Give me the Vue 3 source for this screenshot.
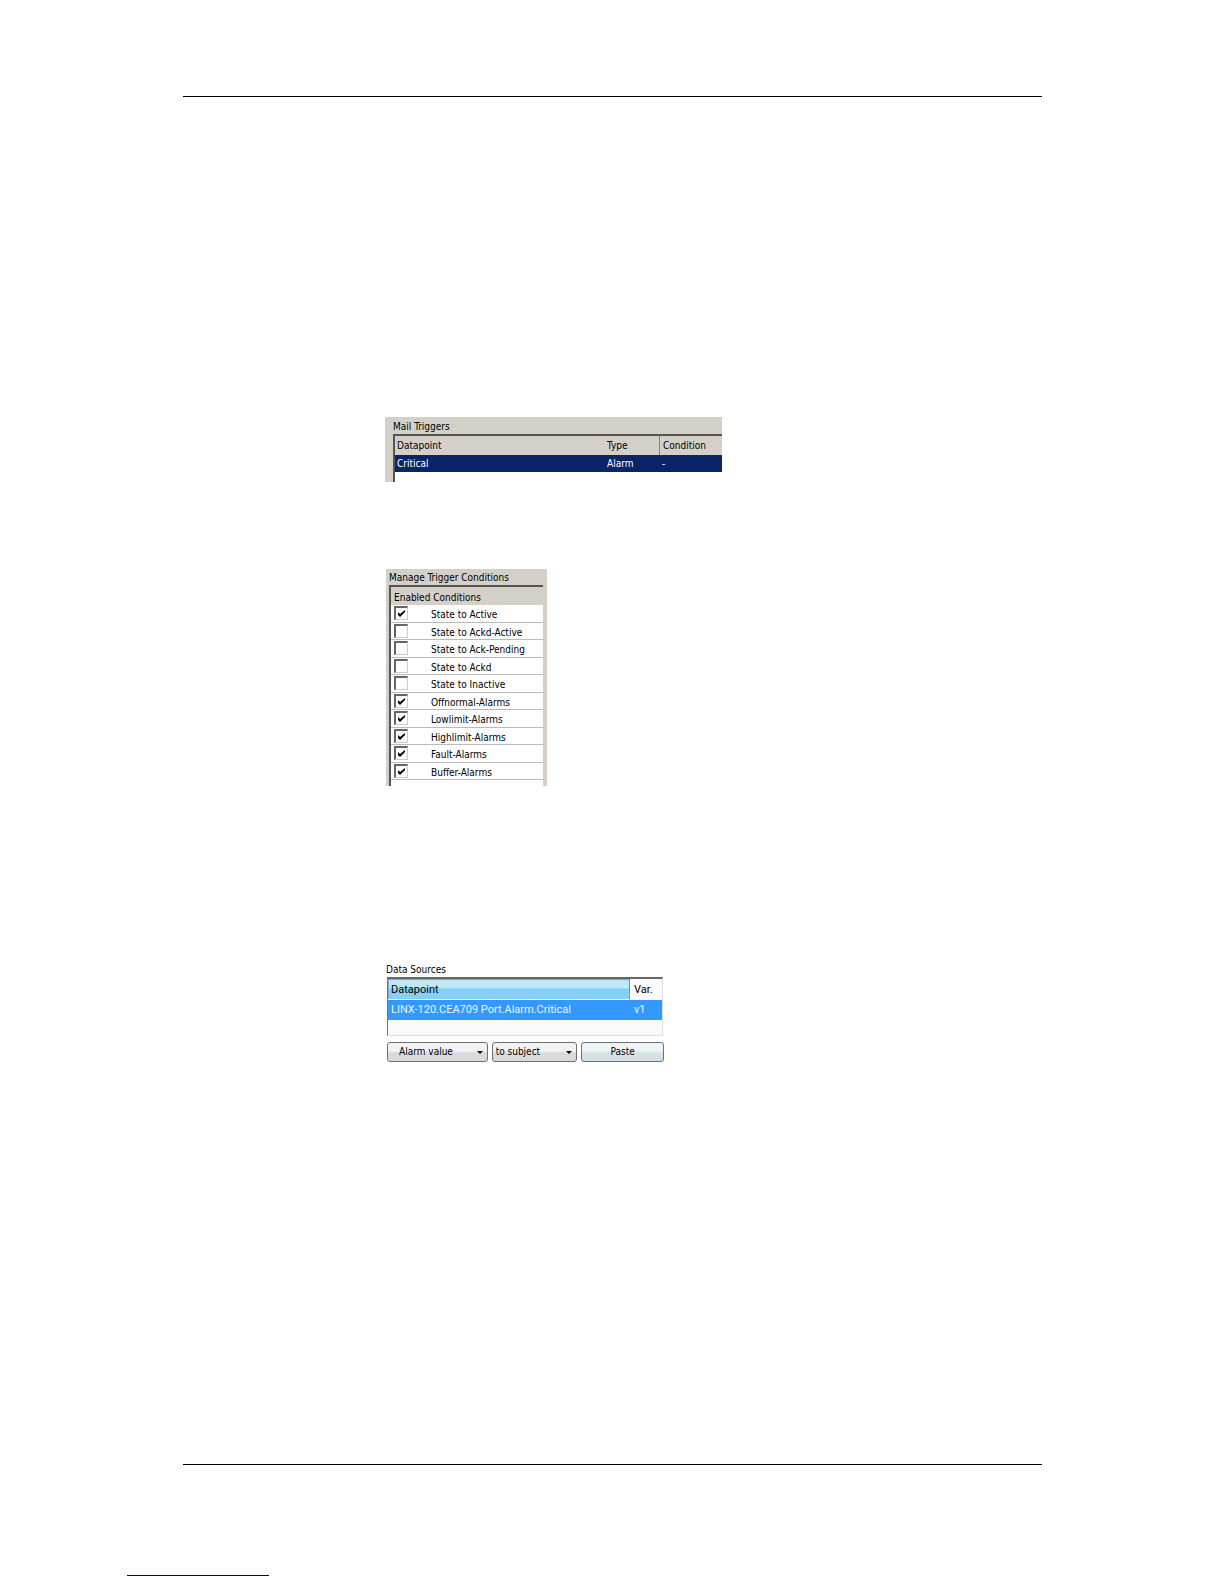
<script setup>
import { ref } from 'vue'

const conditions = ref([
  { id: 'active', label: 'State to Active', on: true },
  { id: 'ackd-active', label: 'State to Ackd-Active', on: false },
  { id: 'ack-pending', label: 'State to Ack-Pending', on: false },
  { id: 'ackd', label: 'State to Ackd', on: false },
  { id: 'inactive', label: 'State to Inactive', on: false },
  { id: 'offnormal', label: 'Offnormal-Alarms', on: true },
  { id: 'lowlimit', label: 'Lowlimit-Alarms', on: true },
  { id: 'highlimit', label: 'Highlimit-Alarms', on: true },
  { id: 'fault', label: 'Fault-Alarms', on: true },
  { id: 'buffer', label: 'Buffer-Alarms', on: true },
])
const value = ref('Alarm value')
const target = ref('to subject')
</script>

<template>
  <div class="page">
    <main class="sheet">
      <section class="triggers">
        <h2 class="title">Mail Triggers</h2>
        <div class="well">
          <table class="grid">
            <thead>
              <tr><th>Datapoint</th><th class="type">Type</th><th class="cond">Condition</th></tr>
            </thead>
            <tbody>
              <tr><td>Critical</td><td>Alarm</td><td>-</td></tr>
            </tbody>
          </table>
        </div>
      </section>

      <section class="conditions">
        <h2 class="title">Manage Trigger Conditions</h2>
        <div class="list">
          <h3 class="head">Enabled Conditions</h3>
          <label v-for="c in conditions" :key="c.id" class="row">
            <span class="tick">
              <input v-model="c.on" type="checkbox" />
              <svg v-if="c.on" viewBox="0 0 7 7" width="7" height="7" aria-hidden="true">
                <path d="M0 2v3l2 2 5-5V0L2 4z" />
              </svg>
            </span>
            <span>{{ c.label }}</span>
          </label>
        </div>
      </section>

      <section class="sources">
        <h2 class="title">Data Sources</h2>
        <div class="box">
          <table class="grid">
            <thead>
              <tr><th class="sorted">Datapoint</th><th class="var">Var.</th></tr>
            </thead>
            <tbody>
              <tr><td>LINX-120.CEA709 Port.Alarm.Critical</td><td>v1</td></tr>
            </tbody>
          </table>
        </div>
        <div class="actions">
          <div class="drop wide">
            <select v-model="value" class="control" aria-label="Value">
              <option>Alarm value</option>
            </select>
            <svg viewBox="0 0 6 3" width="6" height="3" aria-hidden="true"><path d="M0 0h6L3 3z" /></svg>
          </div>
          <div class="drop">
            <select v-model="target" class="control" aria-label="Target">
              <option>to subject</option>
            </select>
            <svg viewBox="0 0 6 3" width="6" height="3" aria-hidden="true"><path d="M0 0h6L3 3z" /></svg>
          </div>
          <button type="button" class="control paste">Paste</button>
        </div>
      </section>
    </main>
    <div class="underline"></div>
  </div>
</template>

<style>
body {
  margin: 0;
  background: #fff;
}
</style>

<style scoped>
.page {
  padding: 96px 182px 8px 183px;
  color: #000;
  font: 10px/18px "DejaVu Sans Condensed", "Noto Sans", sans-serif;
}
.sheet {
  display: flex;
  flex-direction: column;
  align-items: flex-start;
  padding: 320px 0 402px 202px;
  border-top: 1px solid #000;
  border-bottom: 1px solid #000;
}
.underline {
  width: 142px;
  height: 1px;
  margin: 110px 0 0 -56px;
  background: #000080;
}
.title,
.head {
  margin: 0;
  font-size: 10px;
  font-weight: 400;
  line-height: 18px;
  white-space: nowrap;
}
.title {
  height: 16px;
}
.grid {
  width: 100%;
  border-collapse: separate;
  border-spacing: 0;
  table-layout: fixed;
}
.grid th,
.grid td {
  padding: 0 0 0 2px;
  font-weight: 400;
  line-height: 16px;
  text-align: left;
  white-space: nowrap;
}

.triggers,
.conditions {
  box-sizing: border-box;
  background: #d4d0c8;
}
.triggers {
  width: 337px;
  padding: 1px 0 0 8px;
}
.well {
  box-sizing: border-box;
  height: 48px;
  border-top: 2px solid #555;
  border-left: 2px solid #555;
  background: #fff;
}
.triggers th {
  height: 19px;
  background: #d4d0c8;
}
.triggers .type {
  width: 52px;
}
.triggers .cond {
  width: 59px;
  border-left: 1px solid #808080;
}
.triggers .grid .cond,
.triggers td:last-child {
  padding-left: 3px;
}
.triggers td {
  height: 17px;
  background: #0a246a;
  color: #fff;
}

.conditions {
  width: 161px;
  margin: 87px 0 0 1px;
  padding: 0 4px 0 3px;
}
.list {
  box-sizing: border-box;
  height: 201px;
  border-top: 2px solid #555;
  border-left: 2px solid #555;
  background: #fff;
}
.head {
  height: 18px;
  padding-left: 3px;
  background: #d4d0c8;
  line-height: 22px;
}
.row {
  box-sizing: border-box;
  display: flex;
  gap: 23px;
  height: 18px;
  padding: 1px 0 0 3px;
  border-bottom: 1px solid #bbb;
  line-height: 18px;
  white-space: nowrap;
}
.row:nth-child(odd) {
  height: 17px;
}
.tick {
  position: relative;
  width: 14px;
  height: 14px;
}
.tick input {
  appearance: none;
  display: block;
  box-sizing: border-box;
  width: 14px;
  height: 14px;
  margin: 0;
  border: 1px solid #ccc;
  border-top: 2px solid #666;
  border-left: 2px solid #666;
  background: #fff;
}
.tick svg {
  position: absolute;
  top: 4px;
  left: 4px;
  pointer-events: none;
}

.sources {
  width: 278px;
  margin: 175px 0 0 1px;
}
.box {
  box-sizing: border-box;
  width: 276px;
  height: 59px;
  margin: 0 0 6px 1px;
  border: 1px solid #ddd;
  border-top: 2px solid #666;
  border-left: 1px solid #777;
  background: #fafafa;
}
.box .grid {
  font-family: Roboto, "Noto Sans", sans-serif;
  font-size: 11px;
}
.box .grid th,
.box .grid td {
  padding-left: 3px;
}
.box .grid th {
  height: 18px;
  padding-top: 2px;
  border-bottom: 1px solid #fafafa;
  background: #fcfcfc;
}
.box .grid .sorted {
  border-right: 1px solid #5a9cc0;
  box-shadow: inset 1px 1px 0 #6faccc;
  background: linear-gradient(#bde8fa 45%, #86d0f5 50%);
}
.box .grid .var,
.box .grid td:last-child {
  padding-left: 4px;
}
.box .var {
  width: 28px;
}
.box td {
  height: 20px;
  background: #3399ff;
  color: #e8f6ff;
}
.actions {
  display: flex;
  gap: 4px;
  margin-left: 1px;
}
.drop {
  position: relative;
  width: 86px;
}
.wide {
  width: 101px;
}
.drop svg {
  position: absolute;
  top: 9px;
  right: 5px;
  pointer-events: none;
}
.control {
  appearance: none;
  box-sizing: border-box;
  width: 100%;
  height: 20px;
  margin: 0;
  padding: 0 0 0 3px;
  border: 1px solid #707070;
  border-radius: 3px;
  background: linear-gradient(#f2f2f2 45%, #dadada 55%);
  color: #000;
  font: inherit;
}
.wide .control {
  padding-left: 11px;
}
.paste {
  width: 83px;
  padding: 0;
  border-color: #66757f;
  background: linear-gradient(#eff3f6 45%, #d6e0e7 55%);
}
</style>
